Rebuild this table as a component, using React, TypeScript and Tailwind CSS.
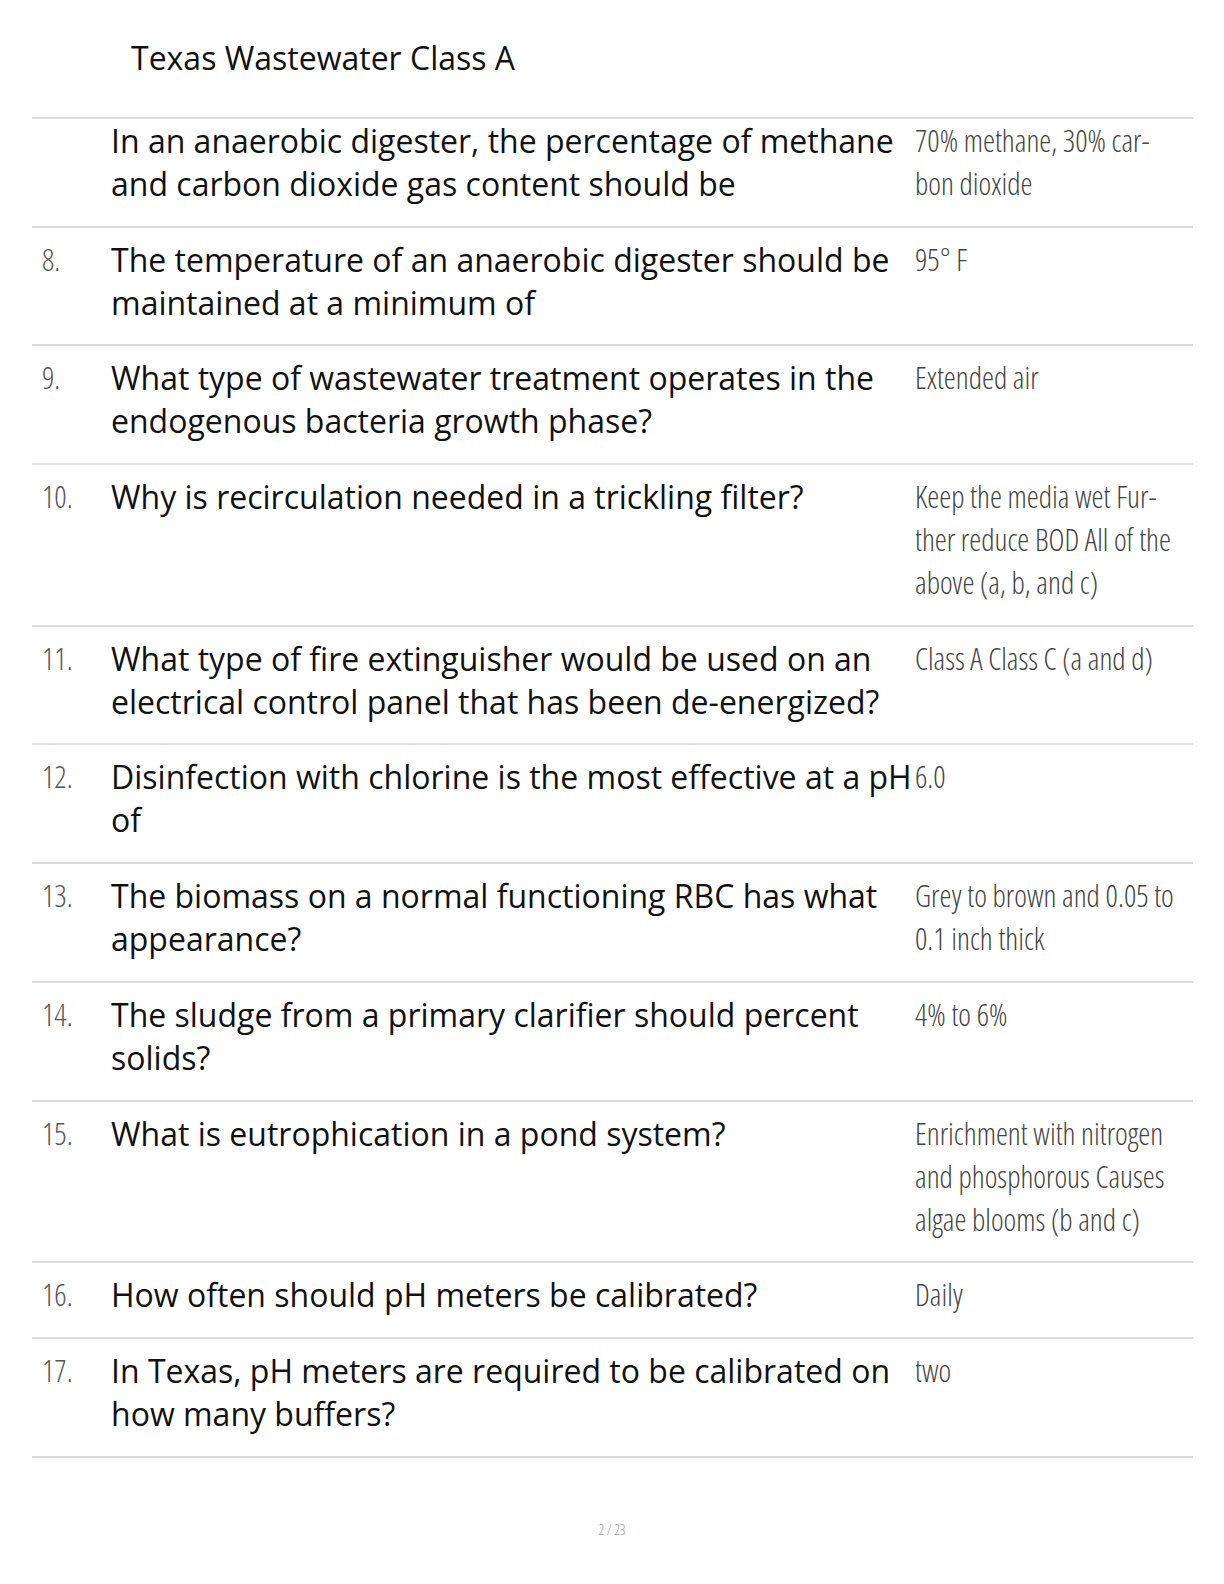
import React from "react";

type Row = { n: string; q: string; a: string };

const rows: Row[] = [
  { n: "", q: "In an anaerobic digester, the percentage of methane and carbon dioxide gas content should be", a: "70% methane, 30% car\u00ADbon dioxide" },
  { n: "8.", q: "The temperature of an anaerobic digester should be maintained at a minimum of", a: "95° F" },
  { n: "9.", q: "What type of wastewater treatment operates in the endogenous bacteria growth phase?", a: "Extended air" },
  { n: "10.", q: "Why is recirculation needed in a trickling filter?", a: "Keep the media wet Fur\u00ADther reduce BOD All of the above (a, b, and c)" },
  { n: "11.", q: "What type of fire extinguisher would be used on an electrical control panel that has been de-energized?", a: "Class A Class C (a and d)" },
  { n: "12.", q: "Disinfection with chlorine is the most effective at a pH of", a: "6.0" },
  { n: "13.", q: "The biomass on a normal functioning RBC has what appearance?", a: "Grey to brown and 0.05 to 0.1 inch thick" },
  { n: "14.", q: "The sludge from a primary clarifier should percent solids?", a: "4% to 6%" },
  { n: "15.", q: "What is eutrophication in a pond system?", a: "Enrichment with nitrogen and phosphorous Causes algae blooms (b and c)" },
  { n: "16.", q: "How often should pH meters be calibrated?", a: "Daily" },
  { n: "17.", q: "In Texas, pH meters are required to be calibrated on how many buffers?", a: "two" },
];

export default function App() {
  return (
    <div className="w-[1224px] h-[1584px] bg-white font-['Open_Sans',sans-serif] text-[#111]" lang="en">
      <div className="pl-[131px] pt-[36px] h-[117px] text-[32px] leading-[43px]">Texas Wastewater Class A</div>
      <div className="mx-[32px] w-[1161px] border-b-2 border-[#dcdce1]">
        {rows.map((r, i) => (
          <div
            key={i}
            className={`grid grid-cols-[79px_804px_278px] border-t-2 border-[#dcdce1] pb-[20.7px] ${i === 0 ? "pt-0" : "pt-[10px]"}`}
          >
            <div className="pl-[10px] text-[30.3px] leading-[43px] font-light [font-stretch:75%] text-[#555]">{r.n}</div>
            <div className="text-[32px] leading-[43px]">{r.q}</div>
            <div className="pr-[14px] text-[30.3px] leading-[43px] font-light [font-stretch:75%] text-[#444]">{r.a}</div>
          </div>
        ))}
      </div>
      <div className="mt-[62px] text-center text-[14px] leading-[20px] font-light [font-stretch:75%] text-[#9a9a9a]">2 / 23</div>
    </div>
  );
}
